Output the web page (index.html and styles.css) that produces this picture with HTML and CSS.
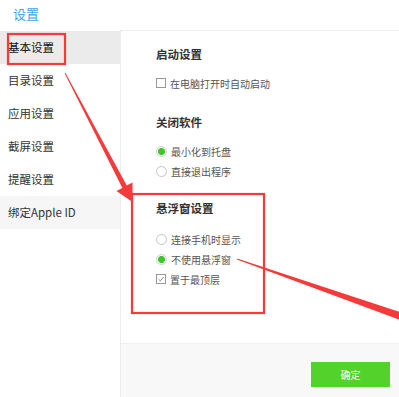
FILE: index.html
```html
<!DOCTYPE html>
<html lang="zh">
<head>
<meta charset="utf-8">
<link rel="stylesheet" href="styles.css">
</head>
<body>
<div class="app">
  <header class="header"><span class="title">设置</span></header>
  <div class="main">
    <nav class="sidebar">
      <div class="nav-item active">基本设置</div>
      <div class="nav-item">目录设置</div>
      <div class="nav-item">应用设置</div>
      <div class="nav-item">截屏设置</div>
      <div class="nav-item">提醒设置</div>
      <div class="nav-item soft">绑定Apple ID</div>
    </nav>
    <section class="panel">
      <div class="panel-body">
        <div class="group g1">
          <div class="heading">启动设置</div>
          <div class="row"><span class="check"></span><span class="label">在电脑打开时自动启动</span></div>
        </div>
        <div class="group g2">
          <div class="heading">关闭软件</div>
          <div class="row"><span class="radio on"></span><span class="label">最小化到托盘</span></div>
          <div class="row"><span class="radio"></span><span class="label">直接退出程序</span></div>
        </div>
        <div class="group g3">
          <div class="heading">悬浮窗设置</div>
          <div class="row"><span class="radio"></span><span class="label">连接手机时显示</span></div>
          <div class="row"><span class="radio on"></span><span class="label">不使用悬浮窗</span></div>
          <div class="row"><span class="check on"><svg viewBox="0 0 10 10" width="10" height="10"><path d="M2 5.2 L4.2 7.4 L8.2 2.6" fill="none" stroke="#777" stroke-width="1.1"/></svg></span><span class="label">置于最顶层</span></div>
        </div>
      </div>
      <footer class="footer"><button class="ok">确定</button></footer>
    </section>
  </div>
  <svg class="marks" viewBox="0 0 399 397" width="399" height="397">
    <rect x="8" y="34" width="57" height="30" fill="none" stroke="#f43a3a" stroke-width="2.2"/>
    <rect x="132" y="194" width="132" height="119" fill="none" stroke="#f43a3a" stroke-width="2.2"/>
    <polygon points="65.4,72.8 126.8,185.6 132.5,182.6 132.5,202 116.5,191 122.4,188 64.6,73.2" fill="#f43a3a"/>
    <polygon points="237.1,258.6 401.2,312.4 398.8,319.6 236.9,259.4" fill="#f43a3a"/>
  </svg>
</div>
</body>
</html>
```

FILE: styles.css
```css
* { box-sizing: border-box; }
html, body { margin: 0; padding: 0; background: #fff; }
body {
  font-family: "Noto Sans CJK SC", "Noto Sans", sans-serif;
  color: #333;
}
.app {
  position: relative;
  width: 399px;
  height: 397px;
  overflow: hidden;
  display: flex;
  flex-direction: column;
}
.header {
  height: 30px;
  display: flex;
  align-items: center;
  padding-left: 13px;
}
.title {
  font-size: 13px;
  color: #3ea3ee;
  line-height: 16px;
  margin-top: -2px;
}
.main {
  flex: 1;
  display: flex;
  min-height: 0;
}
.sidebar {
  width: 120px;
  padding-top: 1px;
  display: flex;
  flex-direction: column;
}
.nav-item {
  height: 33px;
  line-height: 33px;
  padding-left: 8px;
  font-size: 11.5px;
  color: #333;
}
.nav-item.active { background: #ebebeb; color: #111; }
.nav-item.soft { background: #f6f6f6; }
.panel {
  flex: 1;
  display: flex;
  flex-direction: column;
  border-left: 1px solid #ededed;
  border-top: 1px solid #ededed;
}
.panel-body {
  flex: 1;
  padding: 15px 0 0 35px;
}
.heading {
  font-size: 11.5px;
  font-weight: bold;
  line-height: 16px;
  height: 16px;
  color: #333;
  margin-bottom: 11px;
}
.g2 { margin-top: 21px; }
.g3 { margin-top: 19px; }
.g3 .heading { margin-bottom: 13px; }
.row {
  height: 20px;
  display: flex;
  align-items: center;
}
.label {
  font-size: 10px;
  color: #555;
  margin-left: 4px;
}
.check {
  width: 10px;
  height: 10px;
  border: 1px solid #999;
  background: #fff;
  display: flex;
  align-items: center;
  justify-content: center;
}
.check svg { display: block; }
.radio {
  width: 11px;
  height: 11px;
  border: 1px solid #c4c4c4;
  border-radius: 50%;
  background: #fff;
}
.radio.on {
  background: radial-gradient(circle, #3ec62a 0 3.2px, #fff 3.9px);
  border-color: #cfcfcf;
}
.footer {
  height: 54px;
  background: #f8f8f8;
  border-top: 1px solid #efefef;
  display: flex;
  justify-content: flex-end;
  align-items: flex-start;
  padding: 18px 9px 0 0;
}
.ok {
  width: 79px;
  height: 25px;
  border: none;
  background: #52d22a;
  color: #fff;
  font-family: "Noto Sans CJK SC", sans-serif;
  font-size: 10px;
  padding: 0;
}
.marks {
  position: absolute;
  left: 0;
  top: 0;
  pointer-events: none;
}
```
